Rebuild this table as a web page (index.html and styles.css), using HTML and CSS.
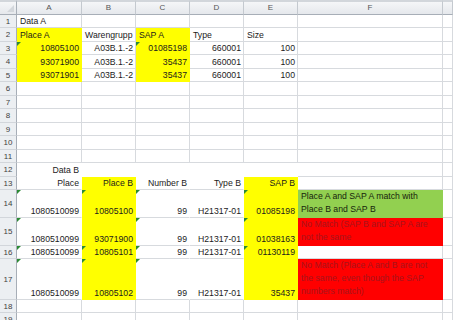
FILE: index.html
```html
<!DOCTYPE html>
<html lang="en">
<head>
  <meta charset="UTF-8">
  <title>Book1 - Place / SAP check</title>
  <link rel="stylesheet" href="styles.css">
</head>
<body>
  <table class="sheet">
    <colgroup>
      <col class="c-head">
      <col class="c-a">
      <col class="c-n"><col class="c-n"><col class="c-n"><col class="c-n">
      <col class="c-f">
      <col class="c-g">
    </colgroup>
    <thead>
      <tr>
        <th class="corner"></th>
        <th>A</th><th>B</th><th>C</th><th>D</th><th>E</th><th>F</th><th></th>
      </tr>
    </thead>
    <tbody>
      <tr class="h13"><th>1</th><td>Data A</td><td></td><td></td><td></td><td></td><td></td><td></td></tr>
      <tr class="h14"><th>2</th><td class="y">Place A</td><td>Warengrupp</td><td class="y">SAP A</td><td>Type</td><td>Size</td><td></td><td></td></tr>
      <tr class="h13"><th>3</th><td class="y n err">10805100</td><td class="n">A03B.1.-2</td><td class="y n err">01085198</td><td class="n">660001</td><td class="n">100</td><td></td><td></td></tr>
      <tr class="h14"><th>4</th><td class="y n">93071900</td><td class="n">A03B.1.-2</td><td class="y n">35437</td><td class="n">660001</td><td class="n">100</td><td></td><td></td></tr>
      <tr class="h13"><th>5</th><td class="y n">93071901</td><td class="n">A03B.1.-2</td><td class="y n">35437</td><td class="n">660001</td><td class="n">100</td><td></td><td></td></tr>
      <tr class="h14"><th>6</th><td></td><td></td><td></td><td></td><td></td><td></td><td></td></tr>
      <tr class="h13"><th>7</th><td></td><td></td><td></td><td></td><td></td><td></td><td></td></tr>
      <tr class="h14"><th>8</th><td></td><td></td><td></td><td></td><td></td><td></td><td></td></tr>
      <tr class="h13"><th>9</th><td></td><td></td><td></td><td></td><td></td><td></td><td></td></tr>
      <tr class="h14"><th>10</th><td></td><td></td><td></td><td></td><td></td><td></td><td></td></tr>
      <tr class="h13"><th>11</th><td></td><td></td><td></td><td></td><td></td><td></td><td></td></tr>
      <tr class="h14"><th>12</th><td class="w nb n">Data B</td><td class="w nb"></td><td class="w nb"></td><td class="w nb"></td><td class="w nb"></td><td></td><td></td></tr>
      <tr class="h13"><th>13</th><td class="w n">Place</td><td class="y n">Place B</td><td class="w n">Number B</td><td class="w n">Type B</td><td class="y n">SAP B</td><td></td><td></td></tr>
      <tr class="h26"><th>14</th><td class="w n err">1080510099</td><td class="y n err">10805100</td><td class="w n err">99</td><td class="w n">H21317-01</td><td class="y n err">01085198</td><td class="ok note">Place A and SAP A match with<br>Place B and SAP B</td><td></td></tr>
      <tr class="h27"><th>15</th><td class="w n err">1080510099</td><td class="y n">93071900</td><td class="w n err">99</td><td class="w n">H21317-01</td><td class="y n err">01038163</td><td class="bad note">No Match (SAP B and SAP A are<br>not the same</td><td></td></tr>
      <tr class="h13"><th>16</th><td class="w n err">1080510099</td><td class="y n err">10805101</td><td class="w n err">99</td><td class="w n">H21317-01</td><td class="y n err">01130119</td><td></td><td></td></tr>
      <tr class="h41"><th>17</th><td class="w n err">1080510099</td><td class="y n err">10805102</td><td class="w n err">99</td><td class="w n">H21317-01</td><td class="y n">35437</td><td class="bad note">No Match (Place A and B are not<br>the same, even though the SAP<br>numbers match)</td><td></td></tr>
      <tr class="h13"><th>18</th><td></td><td></td><td></td><td></td><td></td><td></td><td></td></tr>
      <tr class="h14"><th>19</th><td></td><td></td><td></td><td></td><td></td><td></td><td></td></tr>
    </tbody>
  </table>
</body>
</html>
```

FILE: styles.css
```css
body {
  margin: 0;
  background: #fff;
  overflow: hidden;
  font-family: "Liberation Sans", Arial, sans-serif;
}
.sheet {
  border-collapse: separate;
  border-spacing: 0;
  table-layout: fixed;
  width: 453px;
  font-size: 8.7px;
  color: #1b1b1b;
}
.sheet * {
  box-sizing: border-box;
}
.c-head { width: 17px; }
.c-a { width: 65px; }
.c-n { width: 54px; }
.c-f { width: 145px; }
.c-g { width: 10px; }

/* column letters */
thead th {
  height: 15px;
  padding: 0;
  border-top: 2px solid #d2d6db;
  border-right: 1px solid #c4c9cf;
  border-bottom: 1px solid #a7aeb7;
  background: linear-gradient(#f5f6f8, #e5e8ec);
  color: #555;
  font-weight: normal;
  font-size: 8px;
  line-height: 12px;
  text-align: center;
}
thead th.corner {
  position: relative;
  border-right-color: #a7aeb7;
}
thead th.corner::after {
  content: "";
  position: absolute;
  right: 2px;
  bottom: 2px;
  border-left: 7px solid transparent;
  border-bottom: 7px solid #d3d7dc;
}

/* row numbers */
tbody th {
  padding: 0;
  border-right: 1px solid #a7aeb7;
  border-bottom: 1px solid #d2d6db;
  background: #eceff2;
  color: #3f3f3f;
  font-weight: normal;
  font-size: 8px;
  text-align: center;
  vertical-align: middle;
}
.h13 { height: 13px; }
.h14 { height: 14px; }
.h26 { height: 26px; }
.h27 { height: 27px; }
.h41 { height: 41px; }

td {
  position: relative;
  padding: 0 2px 0 3px;
  border-right: 1px solid #d7dade;
  border-bottom: 1px solid #d7dade;
  vertical-align: bottom;
  white-space: nowrap;
  overflow: hidden;
  line-height: 12px;
}
td.n { text-align: right; padding: 0 2px 0 1px; }

/* fills */
td.y { background: #ffff00; border-color: #ffff00; }
td.ok { background: #92d050; border-color: #92d050; color: #17250c; }
td.bad { background: #ff0000; border-color: #ff0000; color: #a8141c; }
td.w { background: #fff; border-right-color: #fff; }
td.w.nb { border-bottom-color: #fff; }

td.note {
  line-height: 13px;
  padding: 0 2px 1px 3px;
}

/* number-stored-as-text flag */
td.err::before {
  content: "";
  position: absolute;
  left: 0;
  top: 0;
  border-top: 4px solid #2b8a34;
  border-right: 4px solid transparent;
}
```
